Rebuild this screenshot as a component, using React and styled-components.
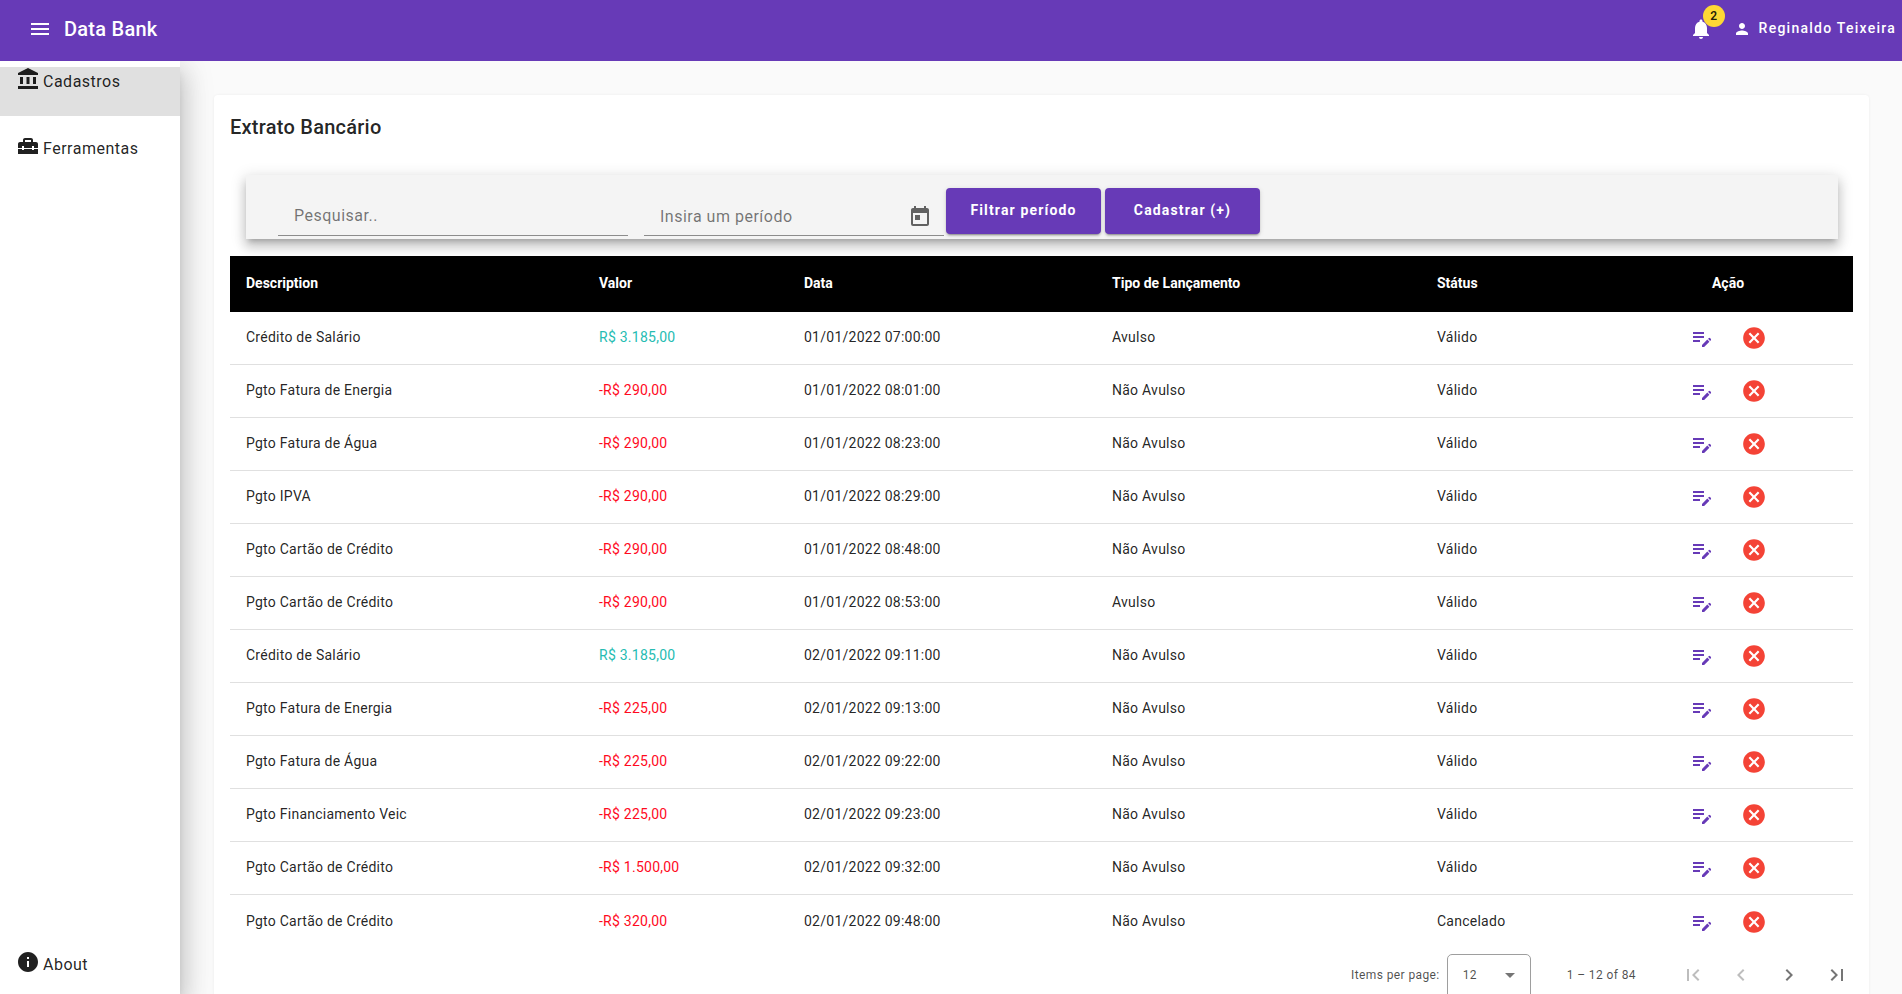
import React from 'react';
import styled, { createGlobalStyle } from 'styled-components';
import {
  MdMenu, MdNotifications, MdPerson, MdAccountBalance, MdHomeRepairService, MdInfo,
  MdToday, MdEditNote, MdCancel, MdFirstPage, MdLastPage, MdChevronLeft, MdChevronRight,
} from 'react-icons/md';

const rows = [
  ['Crédito de Salário', 'R$ 3.185,00', '01/01/2022 07:00:00', 'Avulso', 'Válido'],
  ['Pgto Fatura de Energia', '-R$ 290,00', '01/01/2022 08:01:00', 'Não Avulso', 'Válido'],
  ['Pgto Fatura de Água', '-R$ 290,00', '01/01/2022 08:23:00', 'Não Avulso', 'Válido'],
  ['Pgto IPVA', '-R$ 290,00', '01/01/2022 08:29:00', 'Não Avulso', 'Válido'],
  ['Pgto Cartão de Crédito', '-R$ 290,00', '01/01/2022 08:48:00', 'Não Avulso', 'Válido'],
  ['Pgto Cartão de Crédito', '-R$ 290,00', '01/01/2022 08:53:00', 'Avulso', 'Válido'],
  ['Crédito de Salário', 'R$ 3.185,00', '02/01/2022 09:11:00', 'Não Avulso', 'Válido'],
  ['Pgto Fatura de Energia', '-R$ 225,00', '02/01/2022 09:13:00', 'Não Avulso', 'Válido'],
  ['Pgto Fatura de Água', '-R$ 225,00', '02/01/2022 09:22:00', 'Não Avulso', 'Válido'],
  ['Pgto Financiamento Veic', '-R$ 225,00', '02/01/2022 09:23:00', 'Não Avulso', 'Válido'],
  ['Pgto Cartão de Crédito', '-R$ 1.500,00', '02/01/2022 09:32:00', 'Não Avulso', 'Válido'],
  ['Pgto Cartão de Crédito', '-R$ 320,00', '02/01/2022 09:48:00', 'Não Avulso', 'Cancelado'],
];

const Global = createGlobalStyle`
  html, body { margin: 0; height: 100%; overflow: hidden; }
  body { font-family: Roboto, "Liberation Sans", sans-serif; background: #fafafa; }
  * { box-sizing: border-box; }
`;

const Shell = styled.div`
  height: 994px;
  overflow: hidden;
  display: flex;
  flex-direction: column;
`;
const Toolbar = styled.header`
  height: 61px;
  flex: none;
  background: #673ab7;
  color: #fff;
  display: flex;
  align-items: center;
  padding: 0 6px 3px 28px;
  position: relative;
  z-index: 3;
`;
const Brand = styled.div`
  font-size: 20px;
  font-weight: 500;
  letter-spacing: 0.25px;
  margin-left: 12px;
  flex: 1;
`;
const Bell = styled.div`
  position: relative;
  display: flex;
  margin-right: 20px;
`;
const Badge = styled.span`
  position: absolute;
  top: -12px;
  right: -12px;
  width: 22px;
  height: 22px;
  border-radius: 50%;
  background: #fdd835;
  color: rgba(0, 0, 0, 0.87);
  font-size: 12px;
  font-weight: 600;
  display: flex;
  align-items: center;
  justify-content: center;
`;
const UserName = styled.div`
  font-size: 14px;
  font-weight: 500;
  letter-spacing: 1.25px;
  margin: 0 0 3px 8px;
`;
const Body = styled.div`
  flex: 1;
  display: flex;
  min-height: 0;
`;
const Side = styled.aside`
  width: 180px;
  flex: none;
  background: #fff;
  padding-top: 6px;
  display: flex;
  flex-direction: column;
  box-shadow: 0 8px 10px -5px rgba(0, 0, 0, 0.2), 0 16px 24px 2px rgba(0, 0, 0, 0.14), 0 6px 30px 5px rgba(0, 0, 0, 0.12);
  z-index: 2;
`;
const SideItem = styled.div`
  height: ${(p) => (p.$bottom ? '44px' : '49px')};
  flex: none;
  display: flex;
  align-items: flex-start;
  gap: 3px;
  padding-left: 16px;
  font-size: 16px;
  letter-spacing: 0.5px;
  line-height: 29px;
  color: rgba(0, 0, 0, 0.87);
  background: ${(p) => (p.$active ? '#e0e0e0' : 'transparent')};
  margin-bottom: ${(p) => (p.$active ? '18px' : '0')};
  margin-top: ${(p) => (p.$bottom ? 'auto' : '0')};
  svg { font-size: 24px; flex: none; }
`;
const Main = styled.main`
  flex: 1;
  padding: 34px 33px 0 34px;
  min-width: 0;
`;
const Card = styled.section`
  background: #fff;
  border-radius: 4px;
  padding: 16px;
  height: 1000px;
  box-shadow: 0 0 3px rgba(0, 0, 0, 0.06);
`;
const Title = styled.h2`
  margin: 0 0 32px;
  font-size: 20px;
  font-weight: 500;
  letter-spacing: 0.25px;
  line-height: 32px;
  color: rgba(0, 0, 0, 0.87);
`;
const FilterBar = styled.div`
  height: 64px;
  margin: 0 15px 17px 16px;
  background: #f4f4f4;
  display: flex;
  align-items: flex-start;
  padding-left: 32px;
  box-shadow: 0 5px 5px -3px rgba(0, 0, 0, 0.2), 0 8px 10px 1px rgba(0, 0, 0, 0.14), 0 3px 14px 2px rgba(0, 0, 0, 0.12);
`;
const Field = styled.div`
  width: ${(p) => p.$w}px;
  height: 61px;
  margin-right: ${(p) => p.$gap}px;
  border-bottom: 1px solid #8c8c8c;
  display: flex;
  align-items: flex-end;
  justify-content: space-between;
  padding: 0 12px ${(p) => p.$pb}px 16px;
  font-size: 16px;
  letter-spacing: 0.5px;
  line-height: 24px;
  color: rgba(0, 0, 0, 0.54);
  svg { font-size: 24px; color: #616161; }
`;
const Button = styled.button`
  width: 155px;
  height: 46px;
  margin: 13px 4px 0 0;
  padding: 0 0 2px;
  border: 0;
  border-radius: 4px;
  background: #673ab7;
  color: #fff;
  font-family: inherit;
  font-size: 14px;
  font-weight: 700;
  letter-spacing: 1.15px;
  box-shadow: 0 3px 1px -2px rgba(0, 0, 0, 0.2), 0 2px 2px 0 rgba(0, 0, 0, 0.14), 0 1px 5px 0 rgba(0, 0, 0, 0.12);
`;
const Row = styled.div`
  display: grid;
  grid-template-columns: 353px 205px 308px 325px 182px 250px;
  align-items: center;
  height: ${(p) => (p.$head ? '56px' : '53px')};
  padding-bottom: ${(p) => (p.$head ? '3px' : '0')};
  background: ${(p) => (p.$head ? '#000' : '#fff')};
  color: ${(p) => (p.$head ? '#fff' : 'rgba(0, 0, 0, 0.87)')};
  font-size: 14px;
  letter-spacing: ${(p) => (p.$head ? '0' : '0.25px')};
  font-weight: ${(p) => (p.$head ? 700 : 400)};
  border-bottom: ${(p) => (p.$head || p.$last ? '0' : '1px solid #e0e0e0')};
`;
const Cell = styled.div`
  padding-left: ${(p) => (p.$center ? '0' : '16px')};
  padding-bottom: ${(p) => (p.$center ? '0' : p.$lift || '0')};
  color: ${(p) => p.$color || 'inherit'};
  text-align: ${(p) => (p.$center ? 'center' : 'left')};
`;
const Actions = styled.div`
  display: flex;
  align-items: center;
  padding-left: 87px;
  gap: 27px;
`;
const Pager = styled.div`
  display: flex;
  align-items: flex-start;
  justify-content: flex-end;
  margin-right: -8px;
  height: 56px;
  font-size: 12px;
  letter-spacing: 0.4px;
  color: rgba(0, 0, 0, 0.7);
`;
const PagerLabel = styled.span`
  margin-top: 20px;
`;
const Select = styled.div`
  width: 84px;
  height: 60px;
  margin: 6px 36px 0 7px;
  border: 1px solid #9e9e9e;
  border-radius: 5px;
  padding: 13px 15px 0 15px;
  display: flex;
  justify-content: space-between;
`;
const Caret = styled.span`
  width: 0;
  height: 0;
  margin-top: 5px;
  border-left: 5px solid transparent;
  border-right: 5px solid transparent;
  border-top: 5px solid rgba(0, 0, 0, 0.54);
`;
const Range = styled.span`
  margin: 20px 33px 0 0;
`;
const PageButton = styled.span`
  width: 48px;
  height: 48px;
  margin-top: 3px;
  display: flex;
  align-items: center;
  justify-content: center;
  font-size: 24px;
  color: ${(p) => (p.$off ? 'rgba(0, 0, 0, 0.26)' : 'rgba(0, 0, 0, 0.54)')};
`;

export default function App() {
  return (
    <Shell>
      <Global />
      <Toolbar>
        <MdMenu size={24} />
        <Brand>Data Bank</Brand>
        <Bell>
          <MdNotifications size={24} />
          <Badge>2</Badge>
        </Bell>
        <MdPerson size={18} />
        <UserName>Reginaldo Teixeira</UserName>
      </Toolbar>
      <Body>
        <Side>
          <SideItem $active><MdAccountBalance />Cadastros</SideItem>
          <SideItem><MdHomeRepairService />Ferramentas</SideItem>
          <SideItem $bottom><MdInfo />About</SideItem>
        </Side>
        <Main>
          <Card>
            <Title>Extrato Bancário</Title>
            <FilterBar>
              <Field $w={350} $gap={16} $pb={7}>Pesquisar..</Field>
              <Field $w={300} $gap={2} $pb={6}>Insira um período<MdToday /></Field>
              <Button>Filtrar período</Button>
              <Button>Cadastrar (+)</Button>
            </FilterBar>
            <Row $head>
              <Cell>Description</Cell>
              <Cell>Valor</Cell>
              <Cell>Data</Cell>
              <Cell>Tipo de Lançamento</Cell>
              <Cell>Státus</Cell>
              <Cell $center>Ação</Cell>
            </Row>
            {rows.map((r, i) => (
              <Row key={i} $last={i === rows.length - 1}>
                <Cell $lift="2px">{r[0]}</Cell>
                <Cell $lift="2px" $color={r[1].startsWith('-') ? '#ff0a1e' : '#26bcb2'}>{r[1]}</Cell>
                <Cell $lift="2px">{r[2]}</Cell>
                <Cell $lift="2px">{r[3]}</Cell>
                <Cell $lift="2px">{r[4]}</Cell>
                <Actions>
                  <MdEditNote size={24} color="#673ab7" />
                  <MdCancel size={26} color="#f44336" />
                </Actions>
              </Row>
            ))}
            <Pager>
              <PagerLabel>Items per page:</PagerLabel>
              <Select>12<Caret /></Select>
              <Range>1 – 12 of 84</Range>
              <PageButton $off><MdFirstPage /></PageButton>
              <PageButton $off><MdChevronLeft /></PageButton>
              <PageButton><MdChevronRight /></PageButton>
              <PageButton><MdLastPage /></PageButton>
            </Pager>
          </Card>
        </Main>
      </Body>
    </Shell>
  );
}
